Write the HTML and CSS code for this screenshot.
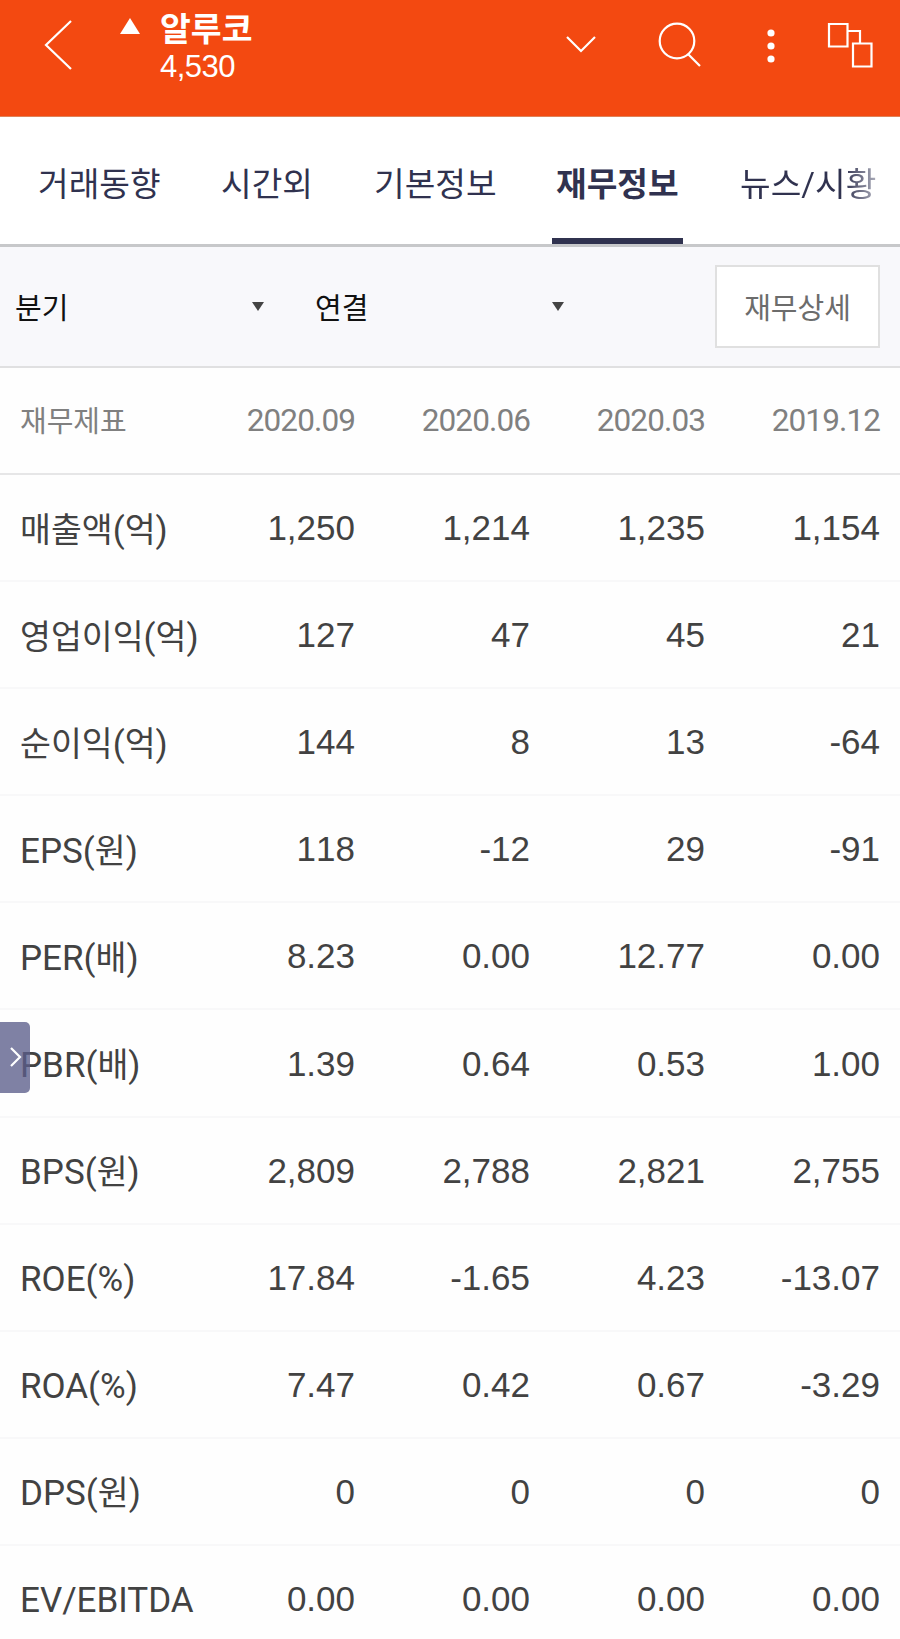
FILE: index.html
```html
<!DOCTYPE html>
<html lang="ko">
<head>
<meta charset="utf-8">
<title>알루코 재무정보</title>
<link rel="stylesheet" href="styles.css">
</head>
<body>
<header class="header">
  <svg class="back" viewBox="0 0 28 52"><path d="M27 2L2 26l25 24"/></svg>
  <svg class="up" viewBox="0 0 20 16"><path d="M10 0l10 16H0z"/></svg>
  <div class="stock"><div class="name">알루코</div><div class="price">4,530</div></div>
  <svg class="tools" viewBox="0 0 320 50">
    <path d="M7 17l14 14 14-14"/>
    <circle cx="117" cy="21" r="17.3"/><path d="M128 34l12 12"/>
    <g class="dots"><circle cx="211" cy="13" r="3.6"/><circle cx="211" cy="26" r="3.6"/><circle cx="211" cy="39" r="3.6"/></g>
    <path d="M269 4h18.500v22.500h-18.500zM293 23.500h18.500v23h-18.500zM287.500 11h12.500v12.500"/>
  </svg>
</header>
<nav class="tabs">
  <a class="tab t1">거래동향</a><a class="tab t2">시간외</a><a class="tab t3">기본정보</a><a class="tab t4 active">재무정보</a><a class="tab t5">뉴스/시황</a>
</nav>
<section class="filters">
  <div class="select"><span>분기</span><i class="caret"></i></div>
  <div class="select second"><span>연결</span><i class="caret"></i></div>
  <button class="detail">재무상세</button>
</section>
<main class="table">
  <div class="row head"><span>재무제표</span><b>2020.09</b><b>2020.06</b><b>2020.03</b><b>2019.12</b></div>
  <div class="row"><span><i>매출액</i>(<i>억</i>)</span><b>1,250</b><b>1,214</b><b>1,235</b><b>1,154</b></div>
  <div class="row"><span><i>영업이익</i>(<i>억</i>)</span><b>127</b><b>47</b><b>45</b><b>21</b></div>
  <div class="row"><span><i>순이익</i>(<i>억</i>)</span><b>144</b><b>8</b><b>13</b><b>-64</b></div>
  <div class="row"><span>EPS(<i>원</i>)</span><b>118</b><b>-12</b><b>29</b><b>-91</b></div>
  <div class="row"><span>PER(<i>배</i>)</span><b>8.23</b><b>0.00</b><b>12.77</b><b>0.00</b></div>
  <div class="row"><span>PBR(<i>배</i>)</span><b>1.39</b><b>0.64</b><b>0.53</b><b>1.00</b></div>
  <div class="row"><span>BPS(<i>원</i>)</span><b>2,809</b><b>2,788</b><b>2,821</b><b>2,755</b></div>
  <div class="row"><span>ROE(%)</span><b>17.84</b><b>-1.65</b><b>4.23</b><b>-13.07</b></div>
  <div class="row"><span>ROA(%)</span><b>7.47</b><b>0.42</b><b>0.67</b><b>-3.29</b></div>
  <div class="row"><span>DPS(<i>원</i>)</span><b>0</b><b>0</b><b>0</b><b>0</b></div>
  <div class="row"><span>EV/EBITDA</span><b>0.00</b><b>0.00</b><b>0.00</b><b>0.00</b></div>
</main>
<div class="handle"><svg viewBox="0 0 12 20"><path d="M1 1l9 9-9 9"/></svg></div>
</body>
</html>
```
FILE: styles.css
```css
* { box-sizing: border-box; }
body { margin: 0; width: 900px; height: 1639px; overflow: hidden; position: relative; background: #fefefe; font-family: Roboto, "Noto Sans CJK KR", sans-serif; color: #424242; }
.header { height: 117px; background: #f34911; display: flex; align-items: flex-start; color: #fff; border-bottom: 1px solid #df8258; }
svg { fill: none; stroke: #fff; stroke-width: 2.2; display: block; flex: none; }
.back { width: 28px; height: 52px; margin: 19px 0 0 44px; }
.up { width: 20px; height: 16px; margin: 18px 0 0 48px; fill: #fff; stroke: none; }
.stock { margin: 11px 0 0 20px; width: 300px; white-space: nowrap; }
.name { font-size: 33.500px; line-height: 38px; font-weight: 700; }
.price { font: 31px/35px "Liberation Sans", sans-serif; letter-spacing: -.5px; }
.tools { width: 320px; height: 50px; margin: 20px 0 0 100px; }
.dots { fill: #fff; stroke: none; }
.tabs { height: 130px; background: #fff; border-bottom: 3px solid #c7c8ca; display: flex; padding-left: 34px; }
.tab { height: 127px; line-height: 135px; font-size: 33.300px; color: #30324f; padding: 0 4px; white-space: nowrap; }
.t1 { width: 131px; margin-right: 52px; }
.t2 { width: 100px; margin-right: 53px; }
.t3 { width: 131px; margin-right: 51px; }
.t4 { width: 131px; margin-right: 53px; }
.active { font-weight: 700; border-bottom: 6px solid #30324f; }
.t5 { background: linear-gradient(90deg, #30324f 75%, #b9bac6 100%); background-clip: text; color: transparent; }
.filters { height: 121px; background: #f8f8fb; border-bottom: 2px solid #e0e0e1; display: flex; padding: 18px 20px 0 15px; }
.select { width: 249px; height: 83px; display: flex; align-items: center; justify-content: space-between; font-size: 29px; color: #111; }
.select span { padding-bottom: 1px; }
.second { margin-left: 51px; }
.caret { border: 6.500px solid transparent; border-top: 9px solid #444; border-bottom: 0; }
.detail { margin-left: auto; width: 165px; height: 83px; padding: 0 0 2px; border: 2px solid #e0e0e0; background: #fff; color: #6c6c6c; font: 29px Roboto, "Noto Sans CJK KR", sans-serif; }
.row { height: 107.100px; display: grid; grid-template-columns: 160px repeat(4, 175px); padding-left: 20px; border-bottom: 2px solid #f8f8f9; align-items: center; font-size: 35px; line-height: 40px; white-space: nowrap; }
.row span { padding-top: 6px; }
.row i { font-style: normal; font-size: 33.600px; }
.row b { font: 35px/40px "Liberation Sans", sans-serif; font-kerning: none; text-align: right; padding-top: 1px; }
.row.head { height: 107px; border-bottom-color: #e6e6e7; font-size: 29px; color: #808080; }
.row.head span { padding-top: 2px; }
.row.head b { font: 31.500px/40px Roboto, sans-serif; letter-spacing: -.9px; padding: 0; }
.handle { position: absolute; left: 0; top: 1022px; width: 30px; height: 71px; border-radius: 0 5px 5px 0; background: rgba(91,94,139,.78); }
.handle svg { width: 12px; height: 20px; margin: 25px 0 0 10px; }
```
